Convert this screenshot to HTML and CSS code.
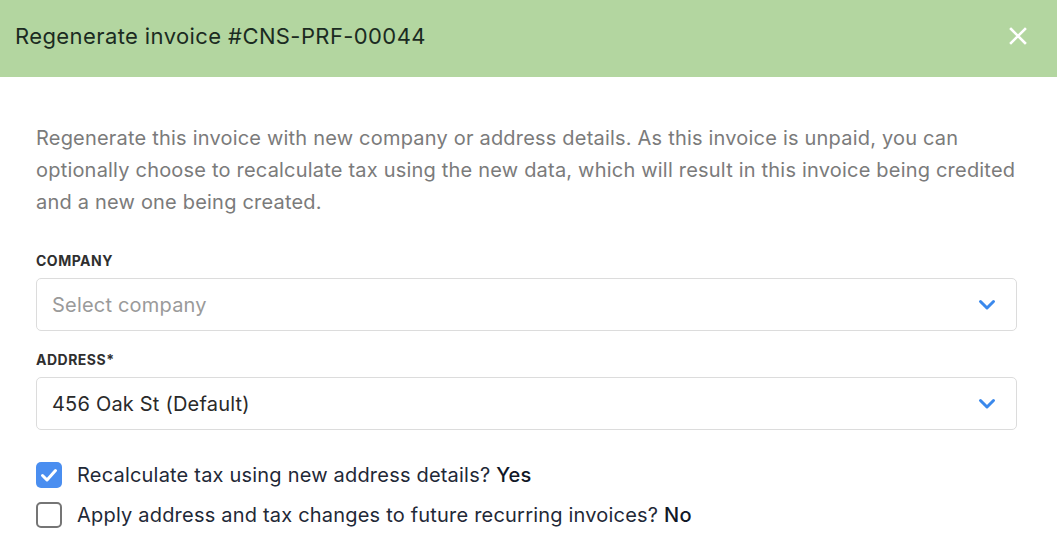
FILE: index.html
```html
<!DOCTYPE html>
<html>
<head>
<meta charset="utf-8">
<link rel="stylesheet" href="styles.css">
</head>
<body>
<div class="modal">
  <div class="header">
    <h1 class="title">Regenerate invoice #CNS-PRF-00044</h1>
    <button class="close" aria-label="Close">
      <svg width="18" height="18" viewBox="0 0 18 18"><path d="M2 2 L16 16 M16 2 L2 16" stroke="#fff" stroke-width="2.6" stroke-linecap="square"/></svg>
    </button>
  </div>
  <div class="body">
    <p class="intro">Regenerate this invoice with new company or address details. As this invoice is unpaid, you can optionally choose to recalculate tax using the new data, which will result in this invoice being credited and a new one being created.</p>
    <div class="field">
      <label class="label">Company</label>
      <div class="select placeholder">
        <span>Select company</span>
        <svg class="chev" width="18" height="12" viewBox="0 0 18 12"><path d="M2.5 2.5 L9 9 L15.5 2.5" fill="none" stroke="#3b89ec" stroke-width="3" stroke-linecap="round" stroke-linejoin="round"/></svg>
      </div>
    </div>
    <div class="field">
      <label class="label">Address*</label>
      <div class="select">
        <span>456 Oak St (Default)</span>
        <svg class="chev" width="18" height="12" viewBox="0 0 18 12"><path d="M2.5 2.5 L9 9 L15.5 2.5" fill="none" stroke="#3b89ec" stroke-width="3" stroke-linecap="round" stroke-linejoin="round"/></svg>
      </div>
    </div>
    <div class="checks">
      <div class="check">
        <span class="box checked"><svg width="26" height="26" viewBox="0 0 26 26"><path d="M6.5 13.5 L11 18 L19.5 8.5" fill="none" stroke="#fff" stroke-width="3" stroke-linecap="round" stroke-linejoin="round"/></svg></span>
        <span class="ctext">Recalculate tax using new address details? <b>Yes</b></span>
      </div>
      <div class="check">
        <span class="box"></span>
        <span class="ctext">Apply address and tax changes to future recurring invoices? <b>No</b></span>
      </div>
    </div>
  </div>
</div>
</body>
</html>
```
FILE: styles.css
```css
* { box-sizing: border-box; }
html, body { margin: 0; padding: 0; background: #fff; }
body { font-family: Inter, "Noto Sans", sans-serif; color: #1f2937; }
.modal { width: 1057px; }
.header {
  height: 77px;
  background: #b3d6a0;
  display: flex;
  align-items: center;
  justify-content: space-between;
  padding: 0 30px 6px 15px;
}
.title { margin: 0; font-weight: 400; font-size: 22px; color: #1b2b22; letter-spacing: 0.4px; }
.close { background: none; border: 0; padding: 0; display: flex; cursor: pointer; }
.body { padding: 45px 40px 0 36px; }
.intro { margin: 0; font-size: 20px; letter-spacing: 0.2px; line-height: 32px; color: #7b7b7b; }
.field { margin-top: 34px; }
.field + .field { margin-top: 20px; }
.label { display: block; font-size: 14px; font-weight: 700; text-transform: uppercase; color: #2f2f2f; letter-spacing: 0.5px; margin-bottom: 9px; }
.select {
  height: 53px;
  border: 1px solid #dcdcdc;
  border-radius: 5px;
  display: flex;
  align-items: center;
  justify-content: space-between;
  padding: 0 20px 0 15px;
  font-size: 20px;
  letter-spacing: 0.2px;
  color: #2a2a2a;
}
.select.placeholder { color: #9a9a9a; }
.chev { display: block; }
.checks { margin-top: 32px; display: flex; flex-direction: column; gap: 14px; }
.check { display: flex; align-items: center; gap: 15px; }
.box { width: 26px; height: 26px; border: 2px solid #757575; border-radius: 5px; display: flex; flex: none; }
.box.checked { background: #4a8ef0; border: 0; }
.ctext { font-size: 20px; letter-spacing: 0.2px; color: #1f2937; }
.ctext b { font-weight: 500; color: #111827; }
```
